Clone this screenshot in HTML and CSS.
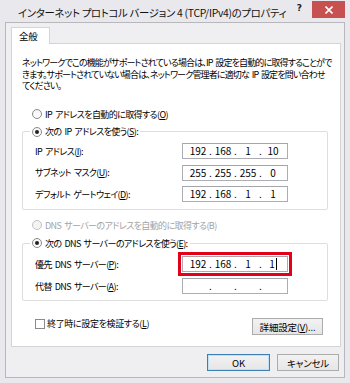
FILE: index.html
```html
<!DOCTYPE html>
<html lang="ja">
<head>
<meta charset="utf-8">
<title>インターネット プロトコル バージョン 4 (TCP/IPv4)のプロパティ</title>
<link rel="stylesheet" href="styles.css">
</head>
<body>
<div class="window">
  <div class="titlebar">
    <div class="title">インターネット プロトコル バージョン 4 (TCP/IPv4)のプロパティ</div>
    <div class="help">?</div>
    <div class="close">
      <svg width="8" height="8" viewBox="0 0 8 8"><path d="M0.5 0.5 L7.5 7.5 M7.5 0.5 L0.5 7.5" stroke="#fff" stroke-width="1.6"/></svg>
    </div>
  </div>
  <div class="client">
    <div class="tabs"><div class="tab">全般</div></div>
    <div class="page">
      <div class="desc">
        <div class="line">ネットワークでこの機能がサポートされている場合は、IP 設定を自動的に取得することがで</div>
        <div class="line">きます。サポートされていない場合は、ネットワーク管理者に適切な IP 設定を問い合わせ</div>
        <div class="line">てください。</div>
      </div>

      <div class="radio-row standalone first"><span class="radio"></span><span>IP アドレスを自動的に取得する(<u>O</u>)</span></div>

      <fieldset class="group group-ip">
        <legend class="radio-row"><span class="radio checked"></span><span>次の IP アドレスを使う(<u>S</u>):</span></legend>
        <div class="field-row">
          <span class="label">IP アドレス(<u>I</u>):</span>
          <div class="ip"><span class="oct">192</span><span class="dot">.</span><span class="oct">168</span><span class="dot">.</span><span class="oct">1</span><span class="dot">.</span><span class="oct">10</span></div>
        </div>
        <div class="field-row">
          <span class="label">サブネット マスク(<u>U</u>):</span>
          <div class="ip"><span class="oct">255</span><span class="dot">.</span><span class="oct">255</span><span class="dot">.</span><span class="oct">255</span><span class="dot">.</span><span class="oct">0</span></div>
        </div>
        <div class="field-row">
          <span class="label">デフォルト ゲートウェイ(<u>D</u>):</span>
          <div class="ip"><span class="oct">192</span><span class="dot">.</span><span class="oct">168</span><span class="dot">.</span><span class="oct">1</span><span class="dot">.</span><span class="oct">1</span></div>
        </div>
      </fieldset>

      <div class="radio-row standalone disabled"><span class="radio"></span><span>DNS サーバーのアドレスを自動的に取得する(B)</span></div>

      <fieldset class="group group-dns">
        <legend class="radio-row"><span class="radio checked"></span><span>次の DNS サーバーのアドレスを使う(<u>E</u>):</span></legend>
        <div class="field-row">
          <span class="label">優先 DNS サーバー(<u>P</u>):</span>
          <div class="ip highlighted"><span class="oct">192</span><span class="dot">.</span><span class="oct">168</span><span class="dot">.</span><span class="oct">1</span><span class="dot">.</span><span class="oct">1<span class="caret"></span></span></div>
        </div>
        <div class="field-row">
          <span class="label">代替 DNS サーバー(<u>A</u>):</span>
          <div class="ip"><span class="oct"></span><span class="dot">.</span><span class="oct"></span><span class="dot">.</span><span class="oct"></span><span class="dot">.</span><span class="oct"></span></div>
        </div>
      </fieldset>

      <div class="bottom-row">
        <label class="check-row"><span class="checkbox"></span><span>終了時に設定を検証する(<u>L</u>)</span></label>
        <button class="btn advanced">詳細設定(<u>V</u>)...</button>
      </div>
    </div>
    <div class="dialog-buttons">
      <button class="btn default">OK</button>
      <button class="btn">キャンセル</button>
    </div>
  </div>
</div>
</body>
</html>
```

FILE: styles.css
```css
html, body {
  margin: 0;
  padding: 0;
  background: #e9e9ed;
}

body {
  font-family: "Noto Sans CJK JP", "Noto Sans", sans-serif;
  font-feature-settings: "palt";
  font-size: 9px;
  letter-spacing: -0.6px;
  word-spacing: 1.5px;
  color: #000;
}

.window {
  width: 350px;
  height: 383px;
  overflow: hidden;
  background: #e9e9ed;
  display: flex;
  flex-direction: column;
  box-sizing: border-box;
}

.titlebar {
  height: 22px;
  display: flex;
  align-items: flex-start;
  flex: none;
}

.title {
  font-size: 10.4px;
  line-height: 14px;
  margin: 6px 0 0 18px;
  letter-spacing: -0.3px;
  word-spacing: 0;
  color: #111;
  white-space: nowrap;
}

.help {
  margin: 2px 0 0 auto;
  font-family: "DejaVu Sans", sans-serif;
  font-weight: bold;
  font-size: 9px;
  line-height: 12px;
  letter-spacing: 0;
  color: #222;
}

.close {
  width: 33px;
  height: 17px;
  margin: 1px 5px 0 10px;
  background: #c75050;
  display: flex;
  align-items: center;
  justify-content: center;
}

.client {
  margin: 0 5px 5px 5px;
  height: 356px;
  border: 1px solid #b8b8bc;
  box-sizing: border-box;
  background: #efeff1;
  display: flex;
  flex-direction: column;
  min-width: 0;
}

.tabs {
  display: flex;
  padding: 4px 0 0 5px;
}

.tab {
  position: relative;
  z-index: 1;
  width: 39px;
  height: 17px;
  box-sizing: border-box;
  border: 1px solid #d4d4d4;
  border-bottom: none;
  background: #fff;
  margin-bottom: -1px;
  padding-left: 7px;
  line-height: 16px;
  font-size: 9.5px;
  letter-spacing: -0.2px;
}

.page {
  margin: 0 3px 0 5px;
  height: 304px;
  box-sizing: border-box;
  border: 1px solid #d4d4d4;
  background: #fff;
  display: flex;
  flex-direction: column;
  min-width: 0;
}

.desc {
  padding: 13px 0 0 10px;
  line-height: 11.5px;
  letter-spacing: -0.85px;
}

.line {
  white-space: nowrap;
}

.radio-row {
  display: flex;
  align-items: center;
  gap: 3px;
  height: 13px;
  line-height: 13px;
  white-space: nowrap;
}

.standalone {
  margin-left: 20px;
}

.standalone.first {
  margin-top: 16px;
}

.radio {
  width: 10px;
  height: 10px;
  box-sizing: border-box;
  border: 1px solid #8a8a8a;
  border-radius: 50%;
  background: linear-gradient(#f4f4f4, #ffffff);
  display: flex;
  align-items: center;
  justify-content: center;
  flex: none;
}

.radio.checked::after {
  content: "";
  width: 4px;
  height: 4px;
  border-radius: 50%;
  background: #222;
}

.disabled {
  color: #a3a3a3;
  margin-top: 8.5px;
}

.disabled .radio {
  border-color: #c2c2c2;
  background: #f4f4f4;
}

.group {
  margin: 0 12px 0 10px;
  border: 1px solid #dedede;
  border-radius: 2px;
  padding: 0 0 0 12px;
  min-width: 0;
  display: flex;
  flex-direction: column;
}

.group legend {
  padding: 0 2px;
  margin-left: -5px;
}

.group-ip {
  margin-top: 4.5px;
  padding-top: 5px;
  padding-bottom: 7px;
  gap: 5.5px;
}

.group-dns {
  margin-top: 5px;
  padding-top: 6.5px;
  padding-bottom: 6px;
  gap: 6px;
}

.field-row {
  display: flex;
  align-items: center;
  height: 16px;
}

.label {
  width: 147px;
  flex: none;
  white-space: nowrap;
}

.ip {
  width: 106px;
  height: 16px;
  box-sizing: border-box;
  border: 1px solid #abadb3;
  border-top-color: #a3a5ab;
  background: #fff;
  padding-left: 5px;
  display: flex;
  align-items: center;
  font-size: 10px;
  line-height: 14px;
  letter-spacing: 0;
  word-spacing: 0;
}

.ip.highlighted {
  outline: 3px solid #e2001a;
  outline-offset: 1px;
}

.oct {
  width: 20px;
  text-align: center;
}

.dot {
  width: 5px;
  text-align: center;
}

.caret {
  display: inline-block;
  width: 1px;
  height: 12px;
  background: #000;
  vertical-align: -2px;
  margin-left: 1px;
}

.bottom-row {
  margin-top: 15px;
  display: flex;
  align-items: flex-start;
  justify-content: space-between;
  padding: 0 17px 0 23px;
}

.check-row {
  display: flex;
  align-items: center;
  gap: 2px;
  height: 13px;
  line-height: 13px;
  margin-top: 1px;
  white-space: nowrap;
  letter-spacing: -0.35px;
}

.checkbox {
  width: 10px;
  height: 10px;
  box-sizing: border-box;
  border: 1px solid #8a8a8a;
  background: #fff;
  flex: none;
}

.btn {
  font-family: "Noto Sans CJK JP", "Noto Sans", sans-serif;
  font-feature-settings: "palt";
  font-size: 9.5px;
  line-height: 14px;
  letter-spacing: -0.2px;
  color: #000;
  box-sizing: border-box;
  border: 1px solid #acacac;
  background: linear-gradient(#f2f2f2, #e6e6e6);
  padding: 0;
  margin: 0;
  height: 17px;
}

.advanced {
  width: 71px;
  margin-top: 2px;
}

.dialog-buttons {
  display: flex;
  justify-content: flex-end;
  gap: 7px;
  margin-top: 7px;
  padding-right: 5px;
}

.dialog-buttons .btn {
  width: 62px;
}

.btn.default {
  width: 63px;
  border-color: #3c7fb1;
  box-shadow: inset 0 0 0 1px #bfe0f5;
}
```
